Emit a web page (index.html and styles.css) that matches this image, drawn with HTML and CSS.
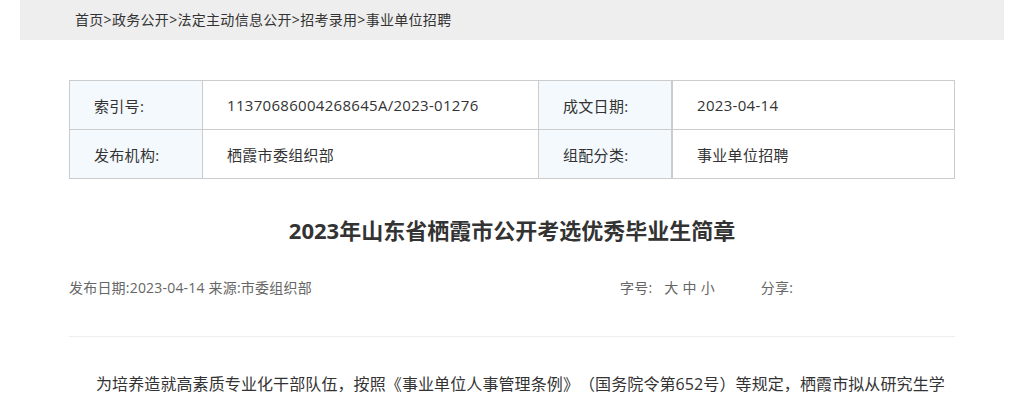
FILE: index.html
```html
<!DOCTYPE html>
<html lang="zh-CN">
<head>
  <meta charset="UTF-8">
  <meta name="viewport" content="width=device-width, initial-scale=1.0">
  <title>2023年山东省栖霞市公开考选优秀毕业生简章</title>
  <link rel="stylesheet" href="styles.css">
</head>
<body>
  <div class="crumbs">
    <a href="#">首页</a>&gt;<a href="#">政务公开</a>&gt;<a href="#">法定主动信息公开</a>&gt;<a href="#">招考录用</a>&gt;<a href="#">事业单位招聘</a>
  </div>

  <div class="main">
    <table class="info-table">
      <tr>
        <td class="label">索引号:</td>
        <td class="value">11370686004268645A/2023-01276</td>
        <td class="label label-r">成文日期:</td>
        <td class="value">2023-04-14</td>
      </tr>
      <tr>
        <td class="label">发布机构:</td>
        <td class="value">栖霞市委组织部</td>
        <td class="label label-r">组配分类:</td>
        <td class="value">事业单位招聘</td>
      </tr>
    </table>

    <h1 class="title">2023年山东省栖霞市公开考选优秀毕业生简章</h1>

    <div class="meta">
      <div class="meta-left">发布日期:2023-04-14 来源:市委组织部</div>
      <div class="meta-right">
        <span class="size">字号:<a href="#">大</a><a href="#">中</a><a href="#">小</a></span>
        <span class="share">分享:</span>
      </div>
    </div>

    <div class="content">
      <p>为培养造就高素质专业化干部队伍，按照《事业单位人事管理条例》（国务院令第652号）等规定，栖霞市拟从研究生学历毕业生中公开考选一批优秀毕业生，现将有关事项公告如下。</p>
    </div>
  </div>
</body>
</html>
```

FILE: styles.css
```css
/* General Styles */
body {
  margin: 0;
  padding: 0;
  font-family: "Open Sans", "Noto Sans CJK SC", sans-serif;
  color: #333;
  background: #fff;
  text-spacing-trim: space-all;
}
a {
  color: inherit;
  text-decoration: none;
}

.crumbs {
  margin: 0 20px;
  height: 40px;
  line-height: 40px;
  padding-left: 55px;
  background: #eeeeee;
  font-size: 14px;
  letter-spacing: 0.3px;
  color: #333;
}

.main {
  width: 886px;
  margin: 0 auto;
  padding-top: 40px;
}

.info-table {
  width: 100%;
  border-collapse: collapse;
  font-size: 15px;
  letter-spacing: 0.3px;
  color: #333;
}
.info-table td {
  height: 48px;
  border: 1px solid #cccccc;
  padding: 0 0 0 24px;
}
.info-table .label {
  background: #f3f9fd;
  width: 108px;
}
.info-table .label-r {
  border-right: 2px solid #cccccc;
}
.info-table tr td:nth-child(2) {
  width: 311px;
}

.title {
  margin: 35px 0 0;
  text-align: center;
  font-size: 22px;
  font-weight: bold;
  color: #333;
  line-height: 32px;
}

.meta {
  display: flex;
  justify-content: space-between;
  margin-top: 32px;
  padding-bottom: 38px;
  border-bottom: 1px solid #eeeeee;
  font-size: 14px;
  letter-spacing: 0.2px;
  color: #666;
  line-height: 20px;
}
.meta-right {
  width: 335px;
}
.meta-right .size {
  margin-right: 42px;
}
.meta-right .size a {
  margin-left: 4px;
}
.meta-right .size a:first-child {
  margin-left: 12px;
}

.content p {
  margin: 0;
  padding-top: 29px;
  text-indent: 27px;
  font-size: 16px;
  letter-spacing: 0.1px;
  line-height: 36px;
  color: #333;
}
```
